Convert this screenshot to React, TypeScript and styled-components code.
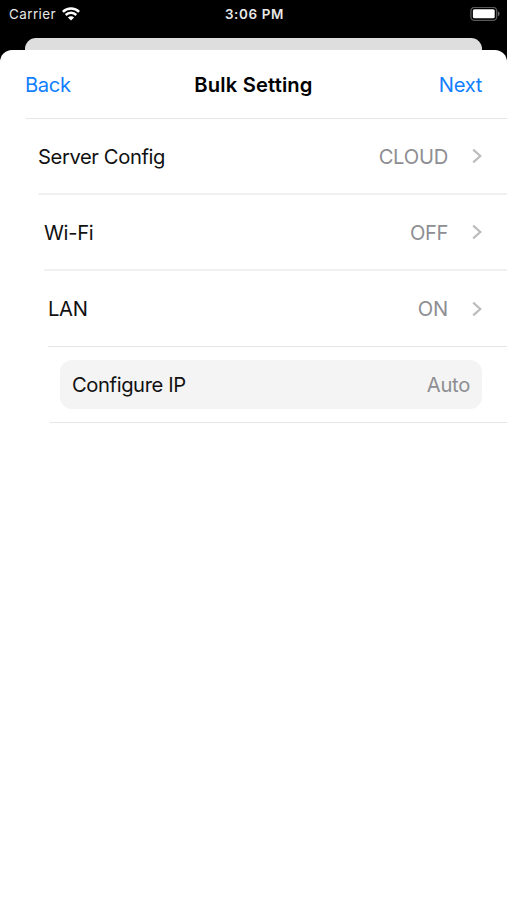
import React from "react";
import styled, { createGlobalStyle } from "styled-components";

const GlobalStyle = createGlobalStyle`
  * { box-sizing: border-box; }
  html, body { margin: 0; background: #000; }
  body { font-family: Inter, "Liberation Sans", sans-serif; -webkit-font-smoothing: antialiased; }
`;

const Screen = styled.div`
  width: 507px;
  height: 900px;
  display: flex;
  flex-direction: column;
  overflow: hidden;
  background: #000;
`;

const StatusBar = styled.header`
  display: grid;
  grid-template-columns: 1fr auto 1fr;
  align-items: center;
  height: 28px;
  flex: none;
  margin-bottom: 10px;
  padding: 0 7px 0 9px;
  color: #e8e8e8;
  font-size: 13.4px;
`;

const Carrier = styled.div`
  display: flex;
  align-items: center;
  gap: 6px;
  letter-spacing: 0.45px;
`;

const Clock = styled.div`
  font-weight: 600;
  letter-spacing: 0.65px;
`;

const BatterySlot = styled.div`
  display: flex;
  justify-content: flex-end;
`;

const BackSheet = styled.div`
  height: 12px;
  flex: none;
  margin: 0 25px;
  border-radius: 11px 11px 0 0;
  background: #dedede;
`;

const Sheet = styled.main`
  flex: 1;
  border-radius: 12px 12px 0 0;
  background: #fff;
`;

const Line = styled.hr<{ $inset: number; $thin?: boolean }>`
  height: ${(p) => (p.$thin ? 1 : 2)}px;
  margin: 0 0 0 ${(p) => p.$inset}px;
  border: 0;
  background: ${(p) => (p.$thin ? "#e6e6e7" : "#f1f1f2")};
`;

const NavBar = styled.nav`
  display: grid;
  grid-template-columns: 1fr auto 1fr;
  align-items: center;
  height: 68px;
  padding: 0 25px;
`;

const NavButton = styled.button<{ $end?: boolean }>`
  justify-self: ${(p) => (p.$end ? "end" : "start")};
  padding: 0;
  border: 0;
  background: none;
  color: #127fff;
  font: inherit;
  font-size: 20.2px;
  letter-spacing: -0.35px;
`;

const Title = styled.h1`
  margin: 0;
  font-size: 20.2px;
  font-weight: 600;
  letter-spacing: 0.15px;
`;

const Row = styled.div<{ $inset: number; $height: number }>`
  display: flex;
  align-items: center;
  height: ${(p) => p.$height}px;
  padding: 0 25px 0 ${(p) => p.$inset}px;
`;

const Label = styled.span<{ $tracking?: number }>`
  flex: 1;
  color: #111;
  font-size: 20.2px;
  letter-spacing: ${(p) => p.$tracking ?? 0}px;
`;

const Value = styled.span<{ $tracking?: number }>`
  color: #8e8e92;
  font-size: 20.2px;
  letter-spacing: ${(p) => p.$tracking ?? 0}px;
`;

const Chevron = styled.svg`
  width: 10px;
  height: 16px;
  margin-left: 24px;
`;

const InsetCard = styled.div`
  display: flex;
  align-items: center;
  height: 49px;
  margin: 13px 25px 13px 60px;
  padding: 0 12px;
  border-radius: 12px;
  background: #f4f4f4;
`;

const settings = [
  { label: "Server Config", value: "CLOUD", inset: 38, height: 74, labelTracking: -0.4, valueTracking: -0.25 },
  { label: "Wi-Fi", value: "OFF", inset: 44, height: 74, labelTracking: -0.3, valueTracking: -0.4 },
  { label: "LAN", value: "ON", inset: 48, height: 75, labelTracking: -0.3, valueTracking: -0.2, thin: true },
];

function Wifi() {
  return (
    <svg width="18" height="14" viewBox="0 0 18 14" fill="none" stroke="#fff" strokeWidth="2.5">
      <path d="M.9 4.8C5.3.3 12.7.3 17.1 4.8M3.7 8c3-2.9 7.6-2.9 10.6 0" />
      <path d="M9 13.5 5.9 10.4C7.5 8.9 10.5 8.9 12.1 10.4Z" fill="#fff" stroke="none" />
    </svg>
  );
}

function Battery() {
  return (
    <svg width="30" height="15" viewBox="0 0 30 15">
      <rect x=".9" y=".3" width="25.8" height="13" rx="3.6" fill="#000" stroke="#59595b" strokeWidth="1.3" />
      <rect x="2.9" y="2.3" width="21.8" height="9" rx="1.5" fill="#fff" />
      <path d="M28 4.3v5q1.6-.7 1.6-2.5T28 4.3Z" fill="#69696b" />
    </svg>
  );
}

export default function App() {
  return (
    <>
      <GlobalStyle />
      <Screen>
        <StatusBar>
          <Carrier>Carrier <Wifi /></Carrier>
          <Clock>3:06 PM</Clock>
          <BatterySlot><Battery /></BatterySlot>
        </StatusBar>
        <BackSheet />
        <Sheet>
          <NavBar>
            <NavButton>Back</NavButton>
            <Title>Bulk Setting</Title>
            <NavButton $end>Next</NavButton>
          </NavBar>
          <Line $inset={26} $thin />
          {settings.map((s) => (
            <React.Fragment key={s.label}>
              <Row $inset={s.inset} $height={s.height}>
                <Label $tracking={s.labelTracking}>{s.label}</Label>
                <Value $tracking={s.valueTracking}>{s.value}</Value>
                <Chevron viewBox="0 0 10 16" fill="none" stroke="#bcbcbf" strokeWidth="2.2">
                  <path d="M1.2 1.6 8.3 8 1.2 14.4" />
                </Chevron>
              </Row>
              <Line $inset={s.inset} $thin={s.thin} />
            </React.Fragment>
          ))}
          <InsetCard>
            <Label $tracking={-0.4}>Configure IP</Label>
            <Value $tracking={-0.3}>Auto</Value>
          </InsetCard>
          <Line $inset={50} $thin />
        </Sheet>
      </Screen>
    </>
  );
}
